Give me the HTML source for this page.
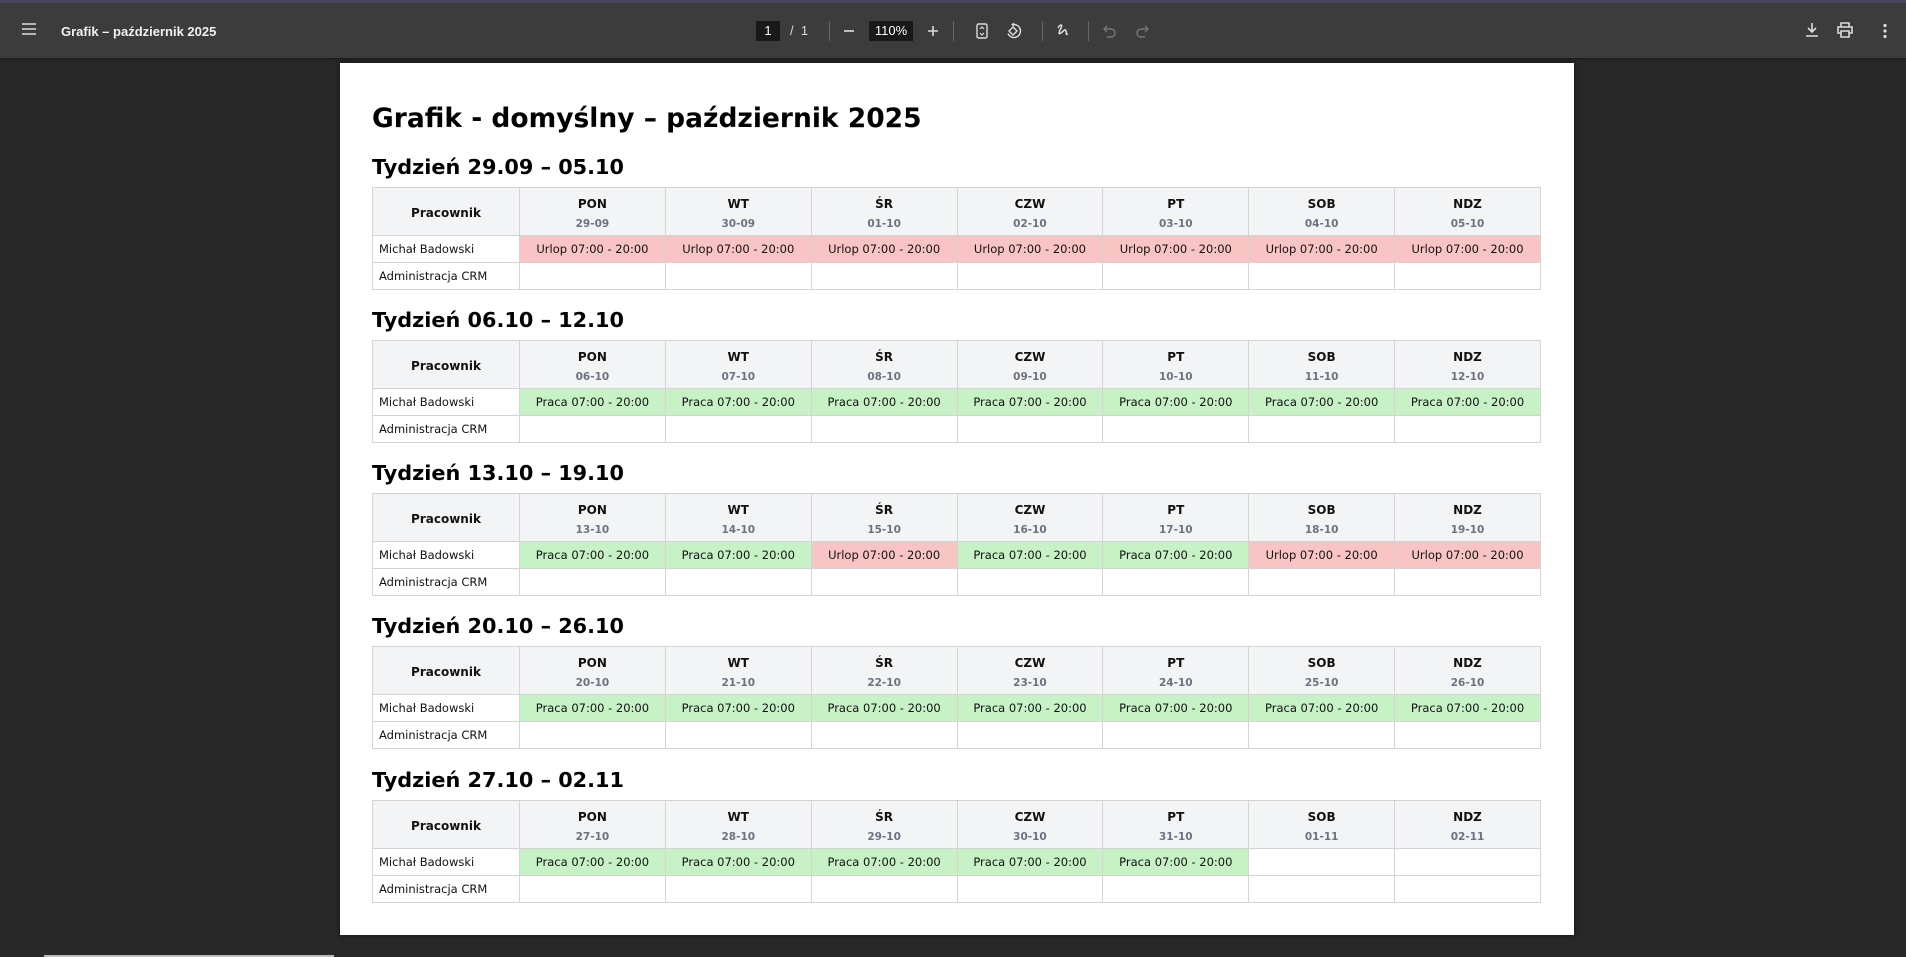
<!DOCTYPE html>
<html><head><meta charset="utf-8">
<style>
*{margin:0;padding:0;box-sizing:border-box}
body{width:1906px;height:957px;overflow:hidden;background:#282828;position:relative;font-family:"DejaVu Sans","Liberation Sans",sans-serif}
.tb{position:absolute;left:0;top:0;width:1906px;height:58px;background:#3c3c3c;border-top:3px solid #4a4458;box-shadow:0 1px 3px rgba(0,0,0,.4)}
.tb *{position:absolute}
.ttl{left:61px;top:21px;font:bold 13px "Liberation Sans",sans-serif;color:#f1f1f1}
.sep{width:1px;height:20px;top:18px;background:#666}
.box{background:#191919;color:#fff;font:13px "Liberation Sans",sans-serif;text-align:center;line-height:20px;top:18px;height:20px}
.page{position:absolute;left:340px;top:63px;width:1234px;height:872px;background:#fff;box-shadow:0 0 6px rgba(0,0,0,.5)}
h1{position:absolute;left:32px;top:39px;font-size:26.5px;font-weight:bold;color:#000;line-height:34px;white-space:nowrap}
.wk{position:absolute;left:32px}
h2{font-size:20.8px;font-weight:bold;line-height:36px;height:36px;margin-bottom:2px;padding-top:0;color:#000;white-space:nowrap}
table{border-collapse:collapse;table-layout:fixed;width:1169px}
td,th{border:1px solid #d4d4d4;font-size:11.5px;color:#111;text-align:center;white-space:nowrap;overflow:hidden}
th{background:#f3f4f6;font-size:12px;font-weight:bold;height:48px;line-height:16px;padding-top:2px}
th span{display:block;font-size:10.5px;color:#6b7280;margin-top:6px;line-height:12px}
td{height:27px}
td.n{text-align:left;padding-left:6px}
td.u{background:#f8c4c4}
td.p{background:#c6f2c6}
col.a{width:147px}
</style></head><body>
<div class="tb">
<svg style="left:21px;top:18px" width="16" height="16" viewBox="0 0 16 16"><path d="M1 3h14M1 8h14M1 13h14" stroke="#ddd" stroke-width="1.6"/></svg>
<div class="ttl">Grafik – październik 2025</div>
<div class="box" style="left:756px;width:24px">1</div>
<div style="left:790px;top:18px;color:#ddd;font:13px 'Liberation Sans',sans-serif;line-height:20px">/&nbsp;&nbsp;1</div>
<div class="sep" style="left:829px"></div>
<svg style="left:843px;top:22px" width="12" height="12"><path d="M1 6h10" stroke="#ddd" stroke-width="1.6"/></svg>
<div class="box" style="left:869px;width:44px">110%</div>
<svg style="left:927px;top:22px" width="12" height="12"><path d="M1 6h10M6 1v10" stroke="#ddd" stroke-width="1.6"/></svg>
<div class="sep" style="left:953px"></div>
<svg style="left:976px;top:20px" width="12" height="16"><rect x="1" y="1" width="10" height="14" rx="1.5" fill="none" stroke="#ddd" stroke-width="1.4"/><path d="M4 6l2-2 2 2M4 10l2 2 2-2" fill="none" stroke="#ddd" stroke-width="1.2"/></svg>
<svg style="left:1004px;top:19px" width="18" height="18" viewBox="0 0 18 18"><path d="M5 9l4-4 4 4-4 4z" fill="none" stroke="#ddd" stroke-width="1.4"/><path d="M10 2.5a6.5 6.5 0 1 1-6 9" fill="none" stroke="#ddd" stroke-width="1.4"/><path d="M10 0.5l0 4-3-2z" fill="#ddd"/></svg>
<div class="sep" style="left:1042px"></div>
<svg style="left:1056px;top:19px" width="16" height="18" viewBox="0 0 16 18"><path d="M2 6c2-4 5-4 3 0s-3 7 0 5 4-5 5-2-1 4 2 3" fill="none" stroke="#ddd" stroke-width="1.5"/></svg>
<div class="sep" style="left:1088px"></div>
<svg style="left:1103px;top:22px" width="14" height="13" viewBox="0 0 14 13"><path d="M4 1L1 4l3 3M1 4h7a4 4 0 0 1 0 8H4" fill="none" stroke="#777" stroke-width="1.4"/></svg>
<svg style="left:1135px;top:22px" width="14" height="13" viewBox="0 0 14 13"><path d="M10 1l3 3-3 3M13 4H6a4 4 0 0 0 0 8h4" fill="none" stroke="#777" stroke-width="1.4"/></svg>
<svg style="left:1805px;top:19px" width="14" height="16" viewBox="0 0 14 16"><path d="M7 1v9M3 6l4 4 4-4M1 14h12" fill="none" stroke="#ddd" stroke-width="1.6"/></svg>
<svg style="left:1836px;top:19px" width="18" height="16" viewBox="0 0 18 16"><path d="M5 5V1h8v4M5 11H2V5h14v6h-3M5 9h8v6H5z" fill="none" stroke="#ddd" stroke-width="1.6"/></svg>
<svg style="left:1882px;top:20px" width="6" height="16"><circle cx="3" cy="2.5" r="1.6" fill="#ddd"/><circle cx="3" cy="8" r="1.6" fill="#ddd"/><circle cx="3" cy="13.5" r="1.6" fill="#ddd"/></svg>
</div>
<div style="position:absolute;left:44px;top:955px;width:290px;height:2px;background:#bbb"></div>

<div class="page">
<h1>Grafik - domyślny – październik 2025</h1>

<div class="wk" style="top:86px">
<h2>Tydzień 29.09 – 05.10</h2>
<table><colgroup><col class="a"><col><col><col><col><col><col><col></colgroup>
<tr><th>Pracownik</th><th>PON<span>29-09</span></th><th>WT<span>30-09</span></th><th>ŚR<span>01-10</span></th><th>CZW<span>02-10</span></th><th>PT<span>03-10</span></th><th>SOB<span>04-10</span></th><th>NDZ<span>05-10</span></th></tr>
<tr><td class="n">Michał Badowski</td><td class="u">Urlop 07:00 - 20:00</td><td class="u">Urlop 07:00 - 20:00</td><td class="u">Urlop 07:00 - 20:00</td><td class="u">Urlop 07:00 - 20:00</td><td class="u">Urlop 07:00 - 20:00</td><td class="u">Urlop 07:00 - 20:00</td><td class="u">Urlop 07:00 - 20:00</td></tr>
<tr><td class="n">Administracja CRM</td><td></td><td></td><td></td><td></td><td></td><td></td><td></td></tr>
</table></div>

<div class="wk" style="top:239px">
<h2>Tydzień 06.10 – 12.10</h2>
<table><colgroup><col class="a"><col><col><col><col><col><col><col></colgroup>
<tr><th>Pracownik</th><th>PON<span>06-10</span></th><th>WT<span>07-10</span></th><th>ŚR<span>08-10</span></th><th>CZW<span>09-10</span></th><th>PT<span>10-10</span></th><th>SOB<span>11-10</span></th><th>NDZ<span>12-10</span></th></tr>
<tr><td class="n">Michał Badowski</td><td class="p">Praca 07:00 - 20:00</td><td class="p">Praca 07:00 - 20:00</td><td class="p">Praca 07:00 - 20:00</td><td class="p">Praca 07:00 - 20:00</td><td class="p">Praca 07:00 - 20:00</td><td class="p">Praca 07:00 - 20:00</td><td class="p">Praca 07:00 - 20:00</td></tr>
<tr><td class="n">Administracja CRM</td><td></td><td></td><td></td><td></td><td></td><td></td><td></td></tr>
</table></div>

<div class="wk" style="top:392px">
<h2>Tydzień 13.10 – 19.10</h2>
<table><colgroup><col class="a"><col><col><col><col><col><col><col></colgroup>
<tr><th>Pracownik</th><th>PON<span>13-10</span></th><th>WT<span>14-10</span></th><th>ŚR<span>15-10</span></th><th>CZW<span>16-10</span></th><th>PT<span>17-10</span></th><th>SOB<span>18-10</span></th><th>NDZ<span>19-10</span></th></tr>
<tr><td class="n">Michał Badowski</td><td class="p">Praca 07:00 - 20:00</td><td class="p">Praca 07:00 - 20:00</td><td class="u">Urlop 07:00 - 20:00</td><td class="p">Praca 07:00 - 20:00</td><td class="p">Praca 07:00 - 20:00</td><td class="u">Urlop 07:00 - 20:00</td><td class="u">Urlop 07:00 - 20:00</td></tr>
<tr><td class="n">Administracja CRM</td><td></td><td></td><td></td><td></td><td></td><td></td><td></td></tr>
</table></div>

<div class="wk" style="top:545px">
<h2>Tydzień 20.10 – 26.10</h2>
<table><colgroup><col class="a"><col><col><col><col><col><col><col></colgroup>
<tr><th>Pracownik</th><th>PON<span>20-10</span></th><th>WT<span>21-10</span></th><th>ŚR<span>22-10</span></th><th>CZW<span>23-10</span></th><th>PT<span>24-10</span></th><th>SOB<span>25-10</span></th><th>NDZ<span>26-10</span></th></tr>
<tr><td class="n">Michał Badowski</td><td class="p">Praca 07:00 - 20:00</td><td class="p">Praca 07:00 - 20:00</td><td class="p">Praca 07:00 - 20:00</td><td class="p">Praca 07:00 - 20:00</td><td class="p">Praca 07:00 - 20:00</td><td class="p">Praca 07:00 - 20:00</td><td class="p">Praca 07:00 - 20:00</td></tr>
<tr><td class="n">Administracja CRM</td><td></td><td></td><td></td><td></td><td></td><td></td><td></td></tr>
</table></div>

<div class="wk" style="top:699px">
<h2>Tydzień 27.10 – 02.11</h2>
<table><colgroup><col class="a"><col><col><col><col><col><col><col></colgroup>
<tr><th>Pracownik</th><th>PON<span>27-10</span></th><th>WT<span>28-10</span></th><th>ŚR<span>29-10</span></th><th>CZW<span>30-10</span></th><th>PT<span>31-10</span></th><th>SOB<span>01-11</span></th><th>NDZ<span>02-11</span></th></tr>
<tr><td class="n">Michał Badowski</td><td class="p">Praca 07:00 - 20:00</td><td class="p">Praca 07:00 - 20:00</td><td class="p">Praca 07:00 - 20:00</td><td class="p">Praca 07:00 - 20:00</td><td class="p">Praca 07:00 - 20:00</td><td></td><td></td></tr>
<tr><td class="n">Administracja CRM</td><td></td><td></td><td></td><td></td><td></td><td></td><td></td></tr>
</table></div>
</div>
</body></html>
